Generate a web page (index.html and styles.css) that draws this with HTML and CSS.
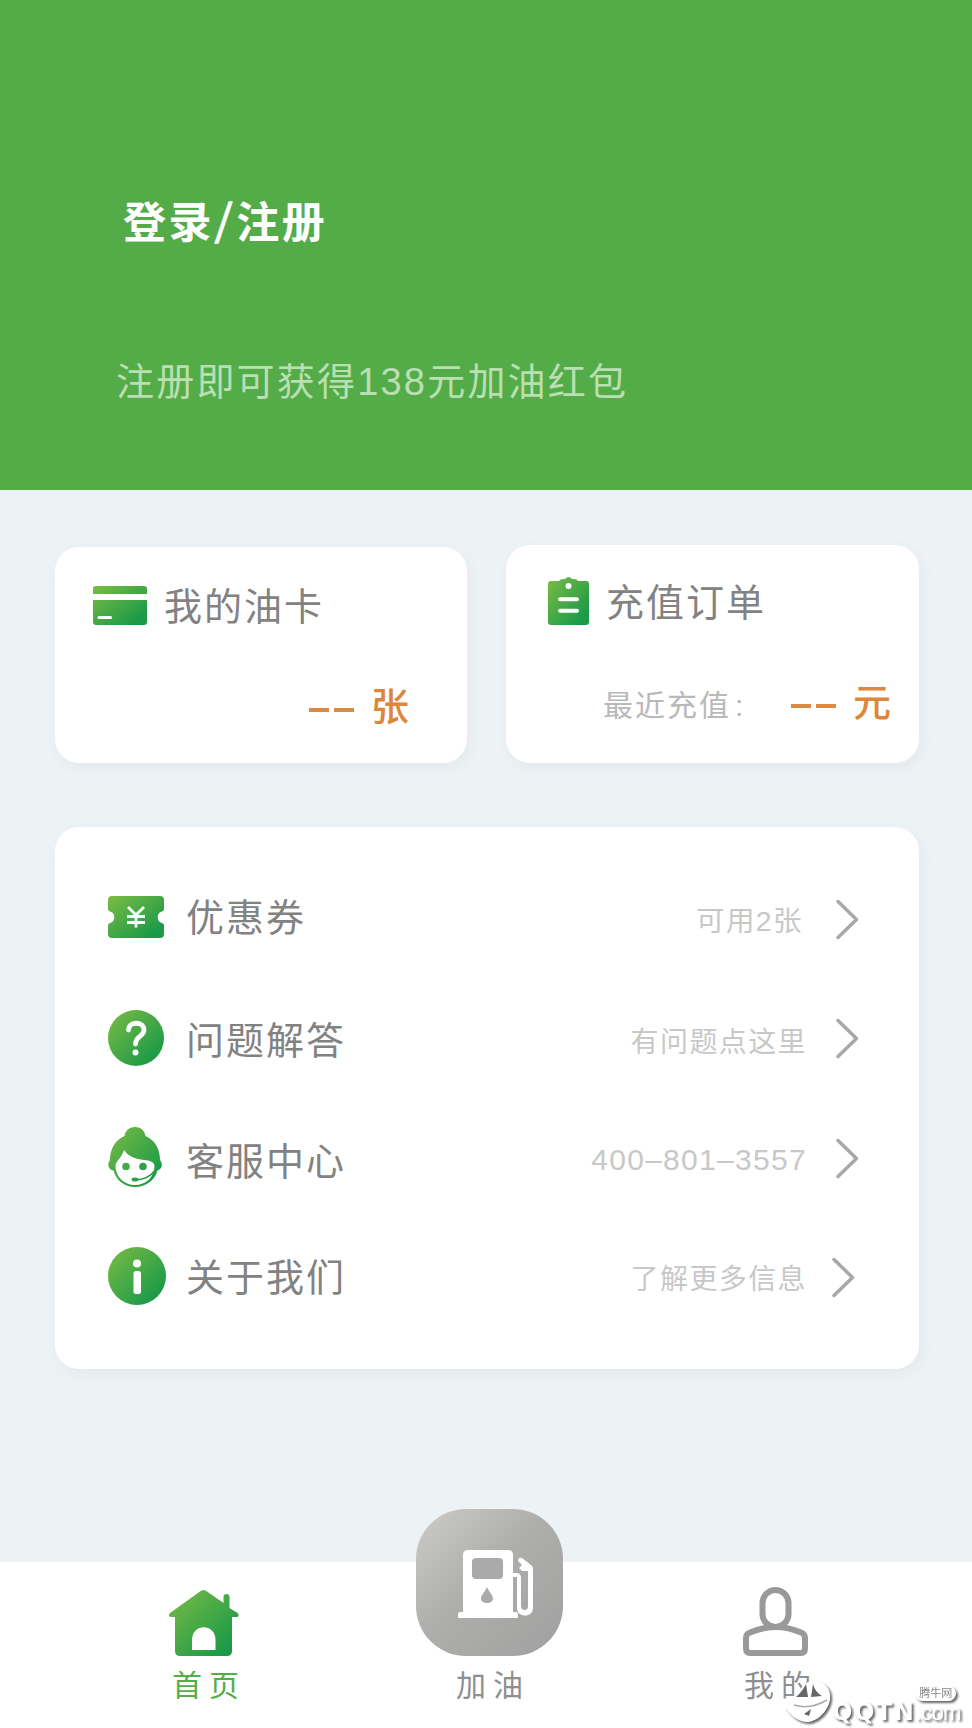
FILE: index.html
```html
<!DOCTYPE html>
<html lang="zh-CN">
<head>
<meta charset="utf-8">
<title>首页</title>
<link rel="stylesheet" href="styles.css">
</head>
<body>
<svg class="defs" width="0" height="0" aria-hidden="true">
  <defs>
    <linearGradient id="leaf" x1="0" y1="0" x2="1" y2="1">
      <stop offset="0.08" stop-color="#73b944"/>
      <stop offset="0.85" stop-color="#1c9a48"/>
    </linearGradient>
  </defs>
</svg>
<div class="app">
  <header class="hero">
    <h1 class="hero-title">登录<span class="slash">/</span>注册</h1>
    <p class="hero-sub">注册即可获得138元加油红包</p>
  </header>
  <main class="content">
    <section class="summary">
      <article class="card oil-card">
        <div class="card-head">
          <svg class="icon" width="54" height="39" viewBox="0 0 54 39"><path d="M0 8V3q0-3 3-3h48q3 0 3 3v5zM0 14h54v22q0 3-3 3H3q-3 0-3-3z" fill="url(#leaf)"/><path d="M6 31.500h11.500" stroke="#fff" stroke-width="3" stroke-linecap="round"/></svg>
          <h2 class="label">我的油卡</h2>
        </div>
        <div class="card-foot"><span class="dashes"><i></i><i></i></span><b class="unit">张</b></div>
      </article>
      <article class="card order-card">
        <div class="card-head">
          <svg class="icon" width="41" height="48" viewBox="0 0 41 48"><path d="M3 4h8q1-2 4-2h2q3.500-4 7 0h2q3 0 4 2h8q3 0 3 3v38q0 3-3 3H3q-3 0-3-3V7q0-3 3-3z" fill="url(#leaf)"/><circle cx="20.500" cy="9" r="3" fill="#fff"/><path d="M12 22.300h17M12 33.700h17" stroke="#fff" stroke-width="4" stroke-linecap="round"/></svg>
          <h2 class="label">充值订单</h2>
        </div>
        <div class="card-foot"><span class="recent">最近充值<span class="colon">:</span></span><span class="dashes"><i></i><i></i></span><b class="unit">元</b></div>
      </article>
    </section>
    <nav class="card menu">
      <a class="row row-coupon">
        <span class="slot"><svg width="56" height="42" viewBox="0 0 56 42"><path d="M4 0h48q4 0 4 4v9q0 2-2 2.500a6 6 0 0 0 0 11.500q2 .5 2 2.500v8.500q0 4-4 4H4q-4 0-4-4v-8.500q0-2 2-2.500a6 6 0 0 0 0-11.500q-2-.5-2-2.500V4q0-4 4-4z" fill="url(#leaf)"/><path d="M20 11l8 8 8-8M28 19v12.500M19 20.500h18M19 26.500h18" fill="none" stroke="#fff" stroke-width="2.800"/></svg></span>
        <span class="label">优惠券</span><span class="hint">可用2张</span>
        <svg class="chev" width="24" height="41" viewBox="0 0 24 41"><path d="M3 2.500l18.500 18L3 38.500"/></svg>
      </a>
      <a class="row row-faq">
        <span class="slot"><svg width="56" height="56" viewBox="0 0 56 56"><circle cx="28" cy="28" r="28" fill="url(#leaf)"/><path d="M20.500 20c0-9 15.500-9 15.500 0 0 6-8.500 6.500-8.500 14" fill="none" stroke="#fff" stroke-width="4.800" stroke-linecap="round"/><circle cx="27.500" cy="42.500" r="3" fill="#fff"/></svg></span>
        <span class="label">问题解答</span><span class="hint">有问题点这里</span>
        <svg class="chev" width="24" height="41" viewBox="0 0 24 41"><path d="M3 2.500l18.500 18L3 38.500"/></svg>
      </a>
      <a class="row row-service">
        <span class="slot"><svg width="54" height="60" viewBox="0 0 54 60"><path d="M16.500 9C18-3 36-3 37.500 9 47 13 52 22 52 33c3 4 2.500 9-2.500 10.500C47 53 38 60 27 60S8 53 5.500 43.500C0 43-1 37 2 33 2 22 7 13 16.500 9z" fill="url(#leaf)"/><path d="M7.500 38.500c0-4 6.500-8 8.500-15.500 5 7 12 9 20 10 6 .5 10.500 2 10.500 6C46.500 50 38 58 27 58S7.500 50 7.500 38.500z" fill="#fff"/><circle cx="18" cy="39.500" r="3.800" fill="#45a947"/><circle cx="35" cy="39.500" r="3.800" fill="#2fa049"/><path d="M27 52.800q13 0 20-9.300" fill="none" stroke="#2b9f49" stroke-width="1.800"/><ellipse cx="27" cy="52.600" rx="3.500" ry="2" fill="#2fa049"/></svg></span>
        <span class="label">客服中心</span><span class="hint phone">400–801–3557</span>
        <svg class="chev" width="24" height="41" viewBox="0 0 24 41"><path d="M3 2.500l18.500 18L3 38.500"/></svg>
      </a>
      <a class="row row-about">
        <span class="slot"><svg width="58" height="58" viewBox="0 0 58 58"><circle cx="29" cy="29" r="29" fill="url(#leaf)"/><circle cx="29" cy="16.500" r="4" fill="#fff"/><rect x="25.500" y="24" width="7.500" height="23" rx="2.500" fill="#fff"/></svg></span>
        <span class="label">关于我们</span><span class="hint">了解更多信息</span>
        <svg class="chev" width="24" height="41" viewBox="0 0 24 41"><path d="M3 2.500l18.500 18L3 38.500"/></svg>
      </a>
    </nav>
  </main>
  <footer class="tabs">
    <a class="tab tab-home">
      <svg width="70" height="66" viewBox="0 0 70 66"><path d="M31 1.500q3.500-3 7 0L54.500 13V7q0-3 3-3t3 3v11l8 5q3 4-2 4H63v34q0 5-5 5H11q-5 0-5-5V27H3q-5 0-2-4z" fill="url(#leaf)"/><path d="M23 60V50c0-17 23.500-17 23.500 0v10z" fill="#fff"/></svg>
      <span>首页</span>
    </a>
    <a class="tab tab-fuel">
      <span class="fuel-button"><svg width="76" height="70" viewBox="0 0 76 70"><path d="M5 62V6q0-5 5-5h40q5 0 5 5v18h3q5 0 5 5v28q0 4 3.500 4t3.500-4V22h-6l-3-3 3-3-4-4q0-4 4-3l9 7q2 1 2 4v39c0 10-16 10-16 0V28h-4v35h3q2 0 2 2v3q0 1-1 1H1q-1 0-1-1v-3q0-2 2-2h3z" fill="#fff"/><rect x="14" y="9" width="31" height="21" rx="4" fill="#aaa"/><path d="M29 38c2 5 6 8 6 11.500 0 6-12 6-12 0C23 46 27 43 29 38z" fill="#aaa"/></svg></span>
      <span>加油</span>
    </a>
    <a class="tab tab-me">
      <svg width="66" height="69" viewBox="0 0 66 69"><g fill="none" stroke="#999" stroke-width="6"><rect x="19.500" y="3" width="26" height="37" rx="13"/><path d="M3 51q0-4 4-5.500 25.500-11 51 0 4 1.500 4 5.500v10q0 5-4 5H7q-4 0-4-5z" stroke-linejoin="round"/></g></svg>
      <span>我的</span>
    </a>
  </footer>
  <div class="mark">
    <svg class="mark-face" width="50" height="44" viewBox="0 0 50 44"><path d="M0 26c4 2 9 0 11-4C13 8 21 0 30 1c11 1 16 9 15 18-1 10-11 22-22 23C13 42 4 35 0 26z" fill="#fff"/><path d="M11 17Q17 12 21 4l2 13zM26 17L28 4q2 8 9 12zM19 34l7-5-2 7z" fill="#666"/><path d="M9 25q16 5 33-5" fill="none" stroke="#aaa" stroke-width="1.500"/></svg>
    <span class="mark-name">QQTN</span>
    <span class="mark-side"><span class="mark-tag">腾牛网</span><span class="mark-com">.com</span></span>
  </div>
</div>
</body>
</html>
```

FILE: styles.css
```css
* { box-sizing: border-box; margin: 0; padding: 0; }
body { font-family: "Liberation Sans", "Noto Sans CJK SC", sans-serif; background: #edf2f5; }
.defs { display: block; width: 0; height: 0; }
svg { display: block; flex: none; }
.app { position: relative; display: flex; flex-direction: column; width: 972px; height: 1728px; overflow: hidden; }
.hero { height: 490px; background: #54ac48; color: #fff; padding: 189px 116px 0; }
.hero-title { font: 700 43px/60px "Noto Sans CJK SC", sans-serif; letter-spacing: 2.500px; padding-left: 7px; }
.slash { display: inline-block; padding: 0 1px 0 2px; transform: translateY(-2px) skewX(-5deg); }
.hero-sub { margin-top: 103px; font-size: 38px; line-height: 60px; letter-spacing: 2.200px; color: #b9dfb2; white-space: nowrap; }
.content { flex: 1; padding: 55px 53px 0 55px; }
.summary { display: flex; justify-content: space-between; align-items: flex-end; }
.card { background: #fff; border-radius: 24px; box-shadow: 3px 5px 14px rgba(80, 95, 120, .06); }
.oil-card { width: 412px; height: 216px; padding: 27px 58px 0 38px; }
.order-card { width: 413px; height: 218px; padding: 25px 28px 0 42px; }
.card-head { display: flex; align-items: center; height: 62px; gap: 17px; }
.card-head .label { padding-top: 3px; }
.label { font-size: 38px; font-weight: 400; line-height: 56px; letter-spacing: 2px; color: #828282; white-space: nowrap; }
.card-foot { display: flex; align-items: center; justify-content: flex-end; height: 60px; margin-top: 41px; }
.dashes { display: flex; gap: 5px; padding-top: 5px; margin-right: 17px; }
.dashes i { width: 20px; height: 4px; background: #dc8a43; }
.unit { font-size: 38px; font-weight: 500; line-height: 56px; color: #dc8739; }
.recent { font-size: 30px; line-height: 44px; letter-spacing: 2px; color: #b9b9b9; margin-right: auto; padding: 6px 0 0 55px; }
.colon { padding-left: 4px; }
.menu { margin-top: 64px; height: 542px; padding: 30px 60px 0 53px; }
.row { display: flex; align-items: center; height: 120px; }
.slot { width: 78px; }
.hint { margin-left: auto; margin-right: 28px; padding-top: 5px; font-size: 28px; letter-spacing: 1.400px; color: #c8c8c8; white-space: nowrap; }
.phone { font-size: 30px; letter-spacing: 1.300px; }
.chev { fill: none; stroke: #a8a8a8; stroke-width: 3.500; stroke-linecap: round; stroke-linejoin: round; margin-top: 2px; }
.row-coupon .label { padding-top: 2px; }
.row-coupon .hint { margin-right: 32px; padding-top: 3px; font-size: 28.500px; }
.row-coupon .chev { margin-top: 4px; }
.row-faq .slot { padding-top: 2px; }
.row-faq .label { padding-top: 7px; }
.row-service .label { padding-top: 9px; }
.row-about .label { padding-top: 2px; }
.row-about .slot { padding-bottom: 3px; }
.row-about .hint { padding-top: 0; padding-bottom: 1px; }
.row-about .chev { margin-left: -4px; margin-right: 4px; margin-top: 0; }
.tabs { display: flex; justify-content: space-between; align-items: flex-end; height: 168px; padding: 0 156px 20px 163px; background: #fff; border-top: 2px solid #f2f2f3; color: #8f8f8f; }
.tab { display: flex; flex-direction: column; align-items: center; gap: 8px; font-size: 30px; line-height: 44px; letter-spacing: 7px; text-indent: 7px; }
.tab-home { color: #55ad48; }
.tab-home span, .tab-me span { text-indent: 9px; margin-right: -2px; }
.fuel-button { display: flex; align-items: center; justify-content: center; width: 147px; height: 147px; padding: 2px 0 0 12px; border-radius: 50px; background: linear-gradient(135deg, #cac9c6 5%, #aeaeac 45%, #a0a0a0); }
.mark { position: absolute; left: 785px; top: 1680px; display: flex; align-items: flex-start; width: 187px; height: 46px; color: #fff; filter: drop-shadow(2px 2px 1px rgba(0, 0, 0, .6)); }
.mark-name { margin: 19px 0 0 -3px; font: 700 24px/26px "DejaVu Sans", sans-serif; letter-spacing: 1.500px; }
.mark-side { display: flex; flex-direction: column; margin-left: 0; margin-top: 6px; }
.mark-tag { align-self: flex-start; padding: 0 4px; border-radius: 8px; background: #fff; color: #888; font-size: 11px; line-height: 15px; }
.mark-com { font-size: 22px; line-height: 23px; letter-spacing: -.5px; }
```
